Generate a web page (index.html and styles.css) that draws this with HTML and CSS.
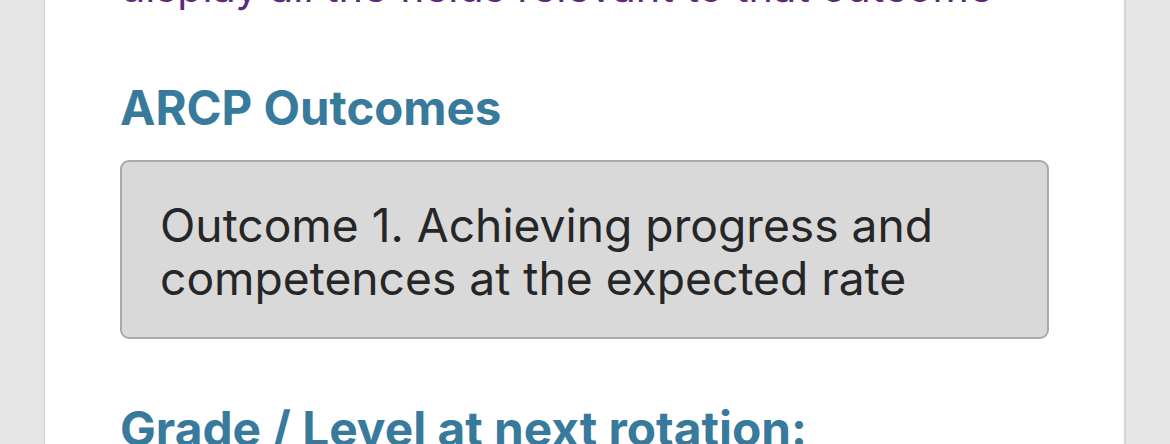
FILE: index.html
```html
<!DOCTYPE html>
<html lang="en">
<head>
<meta charset="utf-8">
<title>ARCP Outcomes</title>
<link rel="stylesheet" href="styles.css">
</head>
<body>
<main class="card">
  <p class="intro">display all the fields relevant to that outcome</p>
  <h2 class="label">ARCP Outcomes</h2>
  <div class="field">Outcome 1. Achieving progress and competences at the expected rate</div>
  <h2 class="label label-next">Grade / Level at next rotation:</h2>
</main>
</body>
</html>
```
FILE: styles.css
```css
html, body {
  margin: 0;
  padding: 0;
  height: 100%;
}
body {
  background: #e6e6e6;
  font-family: "Inter", "Liberation Sans", sans-serif;
  overflow: hidden;
}
.card {
  box-sizing: border-box;
  margin: 0 0 0 44px;
  width: 1082px;
  min-height: 100%;
  background: #ffffff;
  border-left: 1px solid #d2d2d2;
  border-right: 2px solid #d2d2d2;
  padding: 0 75px 0 75px;
  display: flex;
  flex-direction: column;
}
.intro {
  margin: -39px 0 0 0;
  font-size: 41.4px;
  line-height: 52px;
  color: #5c2a77;
  white-space: nowrap;
}
.label {
  margin: 69px 0 0 0;
  font-size: 47.4px;
  line-height: 52px;
  font-weight: 700;
  color: #377a9c;
  white-space: nowrap;
}
.field {
  box-sizing: border-box;
  margin-top: 26px;
  width: 929px;
  height: 179px;
  background: #d9d9d9;
  border: 2px solid #a9a9a9;
  border-radius: 9px;
  padding: 37px 40px 0 38px;
  font-size: 46.2px;
  line-height: 53px;
  color: #262626;
}
.label-next {
  margin-top: 64px;
  font-size: 47.8px;
}
```
